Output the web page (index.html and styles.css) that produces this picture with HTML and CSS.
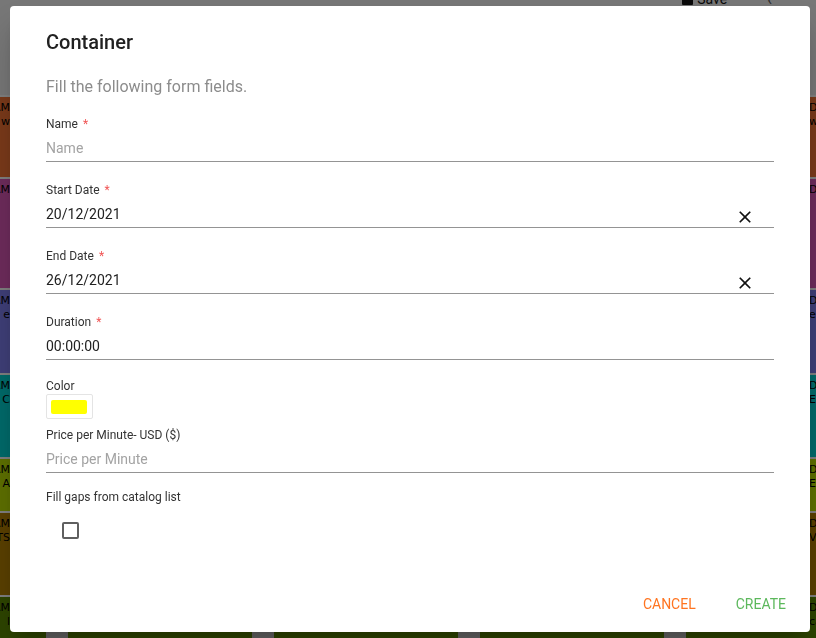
FILE: index.html
```html
<!DOCTYPE html>
<html>
<head>
<meta charset="utf-8">
<link rel="stylesheet" href="styles.css">
</head>
<body>
<div class="page">
  <div class="toolbar">
    <span class="save"><span class="save-ic"></span>Save</span>
    <span class="nav">‹</span>
  </div>
  <div class="rows">
    <div class="row r1"><div class="cell-l"><span>10:00 AM</span><span>w</span></div><div class="cell-r">D Dev<br>wo</div></div>
    <div class="row r2"><div class="cell-l"><span>11:00 AM</span></div><div class="cell-r">D Dev</div></div>
    <div class="row r3"><div class="cell-l"><span>12:00 AM</span><span>e</span></div><div class="cell-r">D Dev<br>e</div></div>
    <div class="row r4"><div class="cell-l"><span>01:00 AM</span><span>C</span></div><div class="cell-r">D Dev<br>E</div></div>
    <div class="row r5"><div class="cell-l"><span>02:00 AM</span><span>A</span></div><div class="cell-r">D Dev<br>EW</div></div>
    <div class="row r6"><div class="cell-l"><span>03:00 AM</span><span>TS</span></div><div class="cell-r">D Dev<br>V</div></div>
    <div class="row r7"><div class="cell-l"><span>04:00 AM</span><span>l</span></div><div class="cell-r">D Dev<br>ca</div></div>
  </div>
  <div class="foot">
    <span class="blk"></span><span class="blk"></span><span class="blk"></span><span class="blk"></span>
  </div>
</div>

<div class="backdrop"></div>

<div class="dialog">
  <div class="content">
    <h2 class="title">Container</h2>
    <p class="subtitle">Fill the following form fields.</p>

    <div class="field">
      <span class="label">Name<span class="req">*</span></span>
      <div class="input-row"><span class="input placeholder">Name</span></div>
    </div>

    <div class="field">
      <span class="label">Start Date<span class="req">*</span></span>
      <div class="input-row"><span class="input">20/12/2021</span>
        <svg class="clear" viewBox="0 0 24 24" width="20" height="20"><path d="M19 6.41L17.59 5 12 10.59 6.41 5 5 6.41 10.59 12 5 17.59 6.41 19 12 13.41 17.59 19 19 17.59 13.41 12z"/></svg>
      </div>
    </div>

    <div class="field">
      <span class="label">End Date<span class="req">*</span></span>
      <div class="input-row"><span class="input">26/12/2021</span>
        <svg class="clear" viewBox="0 0 24 24" width="20" height="20"><path d="M19 6.41L17.59 5 12 10.59 6.41 5 5 6.41 10.59 12 5 17.59 6.41 19 12 13.41 17.59 19 19 17.59 13.41 12z"/></svg>
      </div>
    </div>

    <div class="field field-dur">
      <span class="label">Duration<span class="req">*</span></span>
      <div class="input-row"><span class="input">00:00:00</span></div>
    </div>

    <div class="color-group">
      <span class="label">Color</span>
      <span class="swatch"><span class="swatch-fill"></span></span>
    </div>

    <div class="field field-price">
      <span class="label">Price per Minute- USD ($)</span>
      <div class="input-row"><span class="input placeholder">Price per Minute</span></div>
    </div>

    <span class="label">Fill gaps from catalog list</span>
    <span class="checkbox"></span>
  </div>

  <div class="actions">
    <button class="btn btn-cancel">Cancel</button>
    <button class="btn btn-create">Create</button>
  </div>
</div>
</body>
</html>
```

FILE: styles.css
```css
html, body {
  margin: 0;
  padding: 0;
  width: 816px;
  height: 638px;
  overflow: hidden;
  font-family: Roboto, "Liberation Sans", sans-serif;
}

.page {
  width: 816px;
  height: 638px;
  background: #eeeeee;
  display: flex;
  flex-direction: column;
  overflow: hidden;
}

.toolbar {
  height: 95px;
  display: flex;
  align-items: flex-start;
  justify-content: flex-end;
  gap: 40px;
  padding-right: 44px;
  box-sizing: border-box;
}

.save {
  display: flex;
  align-items: center;
  gap: 4px;
  margin-top: -9px;
  font-size: 14px;
  line-height: 16px;
  color: #111;
}

.save-ic {
  width: 11px;
  height: 11px;
  background: #111;
  border-radius: 1px;
}

.nav {
  margin-top: -10px;
  font-size: 16px;
  color: #555;
}

.rows {
  display: flex;
  flex-direction: column;
}

.row {
  display: flex;
  justify-content: space-between;
  border-top: 2px solid #ffffff;
  box-sizing: border-box;
  font-family: "DejaVu Sans", sans-serif;
  font-size: 11px;
  line-height: 14px;
  color: #000;
  padding-top: 4px;
}

.cell-l {
  width: 10px;
  overflow: hidden;
  white-space: nowrap;
  display: flex;
  flex-direction: column;
  align-items: flex-end;
}

.cell-l span {
  flex: none;
}

.cell-r {
  width: 7px;
  overflow: hidden;
  white-space: nowrap;
  text-align: left;
}

.r1 { height: 82px; background: #f47434; }
.r2 { height: 111px; background: #dc58b8; }
.r3 { height: 85px; background: #7e7ef0; }
.r4 { height: 84px; background: #00d4d4; }
.r5 { height: 54px; background: #bce000; }
.r6 { height: 84px; background: #b48000; }
.r7 { height: 37px; background: #5c8a00; }

.foot {
  flex: 1;
  background: #5c8a00;
  display: flex;
  gap: 184px;
  padding-left: 46px;
}

.blk {
  width: 22px;
  height: 6px;
  background: #c8c8c8;
}

.backdrop {
  position: fixed;
  inset: 0;
  background: rgba(0, 0, 0, 0.5);
}

.dialog {
  position: fixed;
  left: 10px;
  top: 6px;
  width: 800px;
  height: 626px;
  background: #ffffff;
  border-radius: 4px;
  box-shadow: 0 11px 15px -7px rgba(0,0,0,0.2), 0 24px 38px 3px rgba(0,0,0,0.14);
  display: flex;
  flex-direction: column;
}

.content {
  padding: 20px 36px 0;
  display: flex;
  flex-direction: column;
  align-items: stretch;
}

.title {
  margin: 0;
  font-size: 20px;
  line-height: 32px;
  font-weight: 500;
  color: #212121;
}

.subtitle {
  margin: 17px 0 17px;
  font-size: 16px;
  line-height: 24px;
  color: #8c8c8c;
}

.field {
  margin-bottom: 20px;
}

.field-dur { margin-bottom: 18px; }
.field-price { margin-bottom: 16px; }

.label {
  display: block;
  font-size: 12px;
  line-height: 16px;
  color: #333333;
}

.req {
  color: #f05454;
  margin-left: 5px;
}

.input-row {
  display: flex;
  align-items: flex-end;
  padding: 6px 0 3px;
  border-bottom: 1px solid #949494;
}

.input {
  flex: 1;
  font-size: 14px;
  line-height: 20px;
  color: #222222;
}

.placeholder {
  color: #a3a3a3;
}

.clear {
  margin: 0 19px -3px 0;
  fill: #111;
}

.color-group {
  display: flex;
  flex-direction: column;
  align-items: flex-start;
  margin-bottom: 8px;
}

.swatch {
  display: block;
  padding: 5px 5px 4px 4px;
  border: 1px solid #e4e4e4;
  border-radius: 2px;
}

.swatch-fill {
  display: block;
  width: 36px;
  height: 14px;
  background: #ffff00;
  border-radius: 2px;
}

.checkbox {
  display: block;
  width: 17px;
  height: 17px;
  box-sizing: border-box;
  margin: 17px 0 0 16px;
  border: 2px solid #5f5f5f;
  border-radius: 2px;
}

.actions {
  margin-top: auto;
  display: flex;
  justify-content: flex-end;
  gap: 8px;
  padding: 0 8px 10px;
}

.btn {
  height: 36px;
  padding: 0 16px;
  border: none;
  background: transparent;
  font-family: Roboto, "Liberation Sans", sans-serif;
  font-size: 14px;
  font-weight: 400;
  letter-spacing: 0;
  text-transform: uppercase;
  cursor: pointer;
}

.btn-cancel { color: #ff7420; }
.btn-create { color: #5cb85c; }
```
